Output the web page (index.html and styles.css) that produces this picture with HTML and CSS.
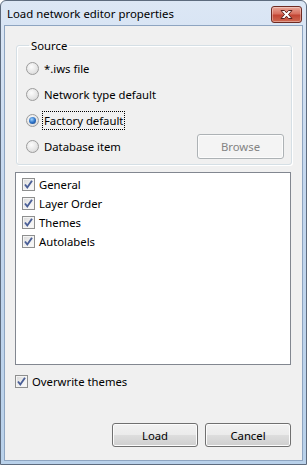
FILE: index.html
```html
<!DOCTYPE html>
<html lang="en">
  <head>
    <meta charset="UTF-8" />
    <title>Load network editor properties</title>
    <link rel="stylesheet" href="styles.css">
  </head>
  <body>
    <!-- DIALOG WINDOW -->
    <div class="window">
      <div class="titlebar">
        <span class="title">Load network editor properties</span>
        <div class="close-btn">
          <svg width="17" height="11" viewBox="0 0 17 11">
            <path d="M3 1.5 L6.5 1.5 L8.5 3.8 L10.5 1.5 L14 1.5 L10.5 5.5 L14 9.5 L10.5 9.5 L8.5 7.2 L6.5 9.5 L3 9.5 L6.5 5.5 Z"
                  fill="#fff" stroke="#5a1f1a" stroke-width="1" stroke-linejoin="round"/>
          </svg>
        </div>
      </div>

      <div class="client">
        <!-- Source group -->
        <fieldset class="group">
          <legend>Source</legend>
          <div class="row">
            <span class="radio"></span>
            <span class="label">*.iws file</span>
          </div>
          <div class="row">
            <span class="radio"></span>
            <span class="label">Network type default</span>
          </div>
          <div class="row">
            <span class="radio checked"></span>
            <span class="label focused">Factory default</span>
          </div>
          <div class="row">
            <span class="radio"></span>
            <span class="label">Database item</span>
            <button class="btn browse" disabled>Browse</button>
          </div>
        </fieldset>

        <!-- Property list -->
        <div class="listbox">
          <div class="item"><span class="check"></span><span class="label">General</span></div>
          <div class="item"><span class="check"></span><span class="label">Layer Order</span></div>
          <div class="item"><span class="check"></span><span class="label">Themes</span></div>
          <div class="item"><span class="check"></span><span class="label">Autolabels</span></div>
        </div>

        <div class="overwrite">
          <span class="check"></span><span class="label">Overwrite themes</span>
        </div>

        <div class="actions">
          <button class="btn">Load</button>
          <button class="btn">Cancel</button>
        </div>
      </div>
    </div>
  </body>
</html>
```

FILE: styles.css
```css
/* Global */
* {
  box-sizing: border-box;
}
body {
  margin: 0;
  font-family: "Noto Sans", "Open Sans", sans-serif;
  font-size: 11.3px;
  color: #000;
  background: #fff;
}

/* WINDOW FRAME */
.window {
  width: 307px;
  height: 465px;
  display: flex;
  flex-direction: column;
  border: 1px solid #5d6b7e;
  border-radius: 6px 6px 0 0;
  background: linear-gradient(180deg, #dce7f5 0%, #c4d7ee 40%, #b9d1ea 100%);
  padding: 0 3px 3px 3px;
}
.titlebar {
  height: 24px;
  display: flex;
  align-items: center;
  justify-content: space-between;
  padding: 0 1px 0 3px;
}
.title {
  font-size: 11.4px;
  padding-top: 1px;
}
.close-btn {
  width: 31px;
  height: 17px;
  margin-top: 2px;
  border: 1px solid #6e2a22;
  border-radius: 3px;
  background: linear-gradient(180deg, #e8a597 0%, #d8705f 45%, #c24534 55%, #cf6a52 100%);
  box-shadow: inset 0 0 0 1px rgba(255, 255, 255, 0.35);
  display: flex;
  align-items: center;
  justify-content: center;
}

/* CLIENT AREA */
.client {
  flex: 1;
  background: #f0f0f0;
  border: 1px solid #8ea5c1;
  padding: 12px 10px 0 10px;
  display: flex;
  flex-direction: column;
}

/* Group box */
.group {
  margin: 0 0 0 1px;
  padding: 2px 7px 5px 9px;
  border: 1px solid #d5dfe5;
  border-radius: 3px;
  box-shadow: inset 1px 1px 0 #fff, 1px 1px 0 #fff;
}
.group legend {
  padding: 0 2px;
  margin-left: 3px;
}
.row {
  height: 26px;
  display: flex;
  align-items: center;
}
.label {
  line-height: 15px;
}
.focused {
  outline: 1px dotted #000;
  outline-offset: 1px;
}

/* Radio buttons */
.radio {
  width: 13px;
  height: 13px;
  border-radius: 50%;
  border: 1px solid #9c9c9c;
  background: radial-gradient(circle at 40% 35%, #fcfcfc 0%, #e4e4e4 60%, #d0d0d0 100%);
  margin-right: 5px;
  position: relative;
}
.radio.checked::after {
  content: "";
  position: absolute;
  left: 2px;
  top: 2px;
  width: 7px;
  height: 7px;
  border-radius: 50%;
  background: radial-gradient(circle at 40% 35%, #9fd4ff 0%, #2d73c8 50%, #1a3f7a 100%);
}

/* Buttons */
.btn {
  font-family: inherit;
  font-size: 11.3px;
  color: #000;
  width: 86px;
  height: 24px;
  border: 1px solid #707070;
  border-radius: 3px;
  background: linear-gradient(180deg, #f2f2f2 0%, #ebebeb 48%, #dddddd 52%, #cfcfcf 100%);
  box-shadow: inset 0 0 0 1px #fcfcfc;
  padding: 0;
}
.browse {
  margin-left: auto;
  width: 87px;
  height: 25px;
  color: #838383;
  border-color: #adb2b5;
  background: #f4f4f4;
}

/* List box */
.listbox {
  margin-top: 7px;
  height: 193px;
  background: #fff;
  border: 1px solid #828790;
  padding: 2px 6px;
  margin-right: 1px;
}
.item {
  height: 19px;
  display: flex;
  align-items: center;
}

/* Checkboxes */
.check {
  width: 13px;
  height: 13px;
  border: 1px solid #8e8f8f;
  box-shadow: inset 0 0 0 1px #f4f4f4;
  margin-right: 4px;
  background-image: url("data:image/svg+xml;utf8,<svg xmlns='http://www.w3.org/2000/svg' width='11' height='11'><path d='M2 5.5 L4.3 8.5 L9 1.8' fill='none' stroke='%234a5f97' stroke-width='1.9'/></svg>"),
    linear-gradient(135deg, #d8d8d8 0%, #f2f2f2 60%, #fbfbfb 100%);
  background-repeat: no-repeat;
  background-position: center;
}

.overwrite {
  display: flex;
  align-items: center;
  margin-top: 9px;
  height: 15px;
}

/* Bottom buttons */
.actions {
  margin-top: auto;
  margin-bottom: 13px;
  display: flex;
  justify-content: flex-end;
  gap: 7px;
  padding-right: 1px;
}
```
